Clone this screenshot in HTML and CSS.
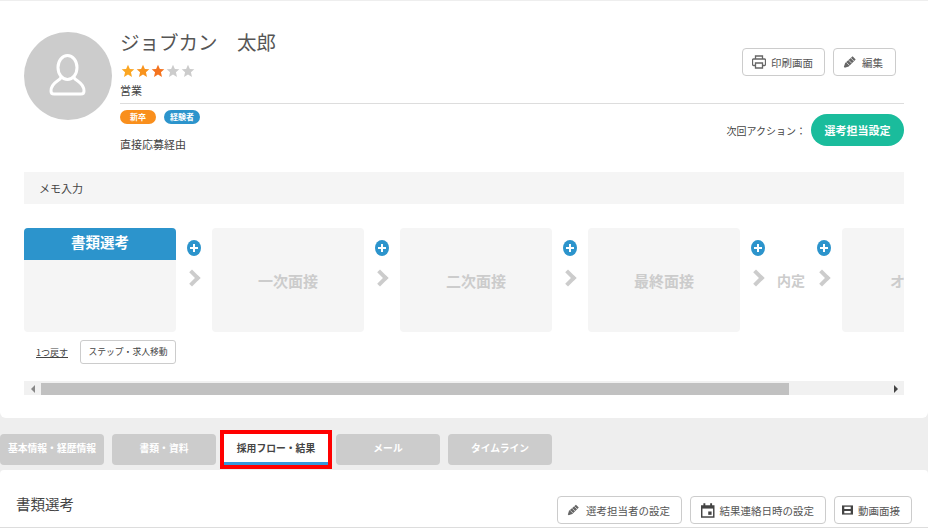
FILE: index.html
```html
<!DOCTYPE html>
<html lang="ja">

<head>
    <meta charset="UTF-8">
    <title>ジョブカン 太郎</title>
    <link rel="stylesheet" href="styles.css">
</head>

<body>
    <div class="card">
        <div class="profile">
            <div class="avatar">
                <svg width="56" height="56" viewBox="0 0 56 56" fill="none" stroke="#fff" stroke-width="3" stroke-linecap="round">
                    <ellipse cx="27.500" cy="19.500" rx="9.500" ry="12" />
                    <path d="M21 29.500C20 33 11 34 11 43q0 3 3 3h27q3 0 3-3C44 34 35 33 34 29.500" />
                </svg>
            </div>
            <div class="info">
                <div class="info-top">
                    <div>
                        <h1 class="name">ジョブカン　太郎</h1>
                        <div class="stars">
                            <svg class="star on" viewBox="0 0 20 20"><polygon points="10,1 12.700,7 19,7.600 14.200,11.800 15.700,18.500 10,15 4.300,18.500 5.800,11.800 1,7.600 7.300,7" /></svg>
                            <svg class="star on" viewBox="0 0 20 20"><polygon points="10,1 12.700,7 19,7.600 14.200,11.800 15.700,18.500 10,15 4.300,18.500 5.800,11.800 1,7.600 7.300,7" /></svg>
                            <svg class="star on" viewBox="0 0 20 20"><polygon points="10,1 12.700,7 19,7.600 14.200,11.800 15.700,18.500 10,15 4.300,18.500 5.800,11.800 1,7.600 7.300,7" /></svg>
                            <svg class="star" viewBox="0 0 20 20"><polygon points="10,1 12.700,7 19,7.600 14.200,11.800 15.700,18.500 10,15 4.300,18.500 5.800,11.800 1,7.600 7.300,7" /></svg>
                            <svg class="star" viewBox="0 0 20 20"><polygon points="10,1 12.700,7 19,7.600 14.200,11.800 15.700,18.500 10,15 4.300,18.500 5.800,11.800 1,7.600 7.300,7" /></svg>
                        </div>
                        <div class="dept">営業</div>
                    </div>
                    <div class="top-btns">
                        <a class="btn">
                            <svg width="14" height="14" viewBox="0 0 14 14" fill="none" stroke="#666" stroke-width="1.300"><path d="M3.500 4V1h7v3M3.500 10.500H1.500a1 1 0 0 1-1-1V5a1 1 0 0 1 1-1h11a1 1 0 0 1 1 1v4.500a1 1 0 0 1-1 1h-2" /><path d="M3.500 8h7v5h-7z" /></svg>
                            印刷画面
                        </a>
                        <a class="btn btn-edit">
                            <svg width="14" height="14" viewBox="0 0 16 16"><path d="M11 1.500l3.500 3.500-8 8-4.500 1.500-1-1 1.500-4.500z" fill="#666" /><path d="M4 8.500l3.500 3.500M6.500 6l3.500 3.500M9 3.500l3.500 3.500" stroke="#fff" stroke-width=".8" /></svg>
                            編集
                        </a>
                    </div>
                </div>
                <div class="info-bottom">
                    <div>
                        <div class="tags">
                            <span class="tag tag-orange">新卒</span>
                            <span class="tag tag-blue">経験者</span>
                        </div>
                        <div class="route">直接応募経由</div>
                    </div>
                    <div class="next">
                        <span>次回アクション：</span>
                        <a class="next-btn">選考担当設定</a>
                    </div>
                </div>
            </div>
        </div>

        <div class="memo">メモ入力</div>

        <div class="flow">
            <div class="step step-active">
                <div class="step-head">書類選考</div>
            </div>
            <div class="conn">
                <span class="plus"></span>
                <span class="chev"></span>
            </div>
            <div class="step">一次面接</div>
            <div class="conn">
                <span class="plus"></span>
                <span class="chev"></span>
            </div>
            <div class="step">二次面接</div>
            <div class="conn">
                <span class="plus"></span>
                <span class="chev"></span>
            </div>
            <div class="step">最終面接</div>
            <div class="conn">
                <span class="plus"></span>
                <span class="chev"></span>
            </div>
            <div class="step step-plain">内定</div>
            <div class="conn">
                <span class="plus"></span>
                <span class="chev"></span>
            </div>
            <div class="step step-last">オファー</div>
        </div>

        <div class="flow-actions">
            <a class="back">1つ戻す</a>
            <a class="move">ステップ・求人移動</a>
        </div>

        <div class="scrollbar">
            <span class="arrow arrow-left"></span>
            <div class="track"><div class="thumb"></div></div>
            <span class="arrow arrow-right"></span>
        </div>
    </div>

    <div class="tabs">
        <a class="tab">基本情報・経歴情報</a>
        <a class="tab">書類・資料</a>
        <a class="tab tab-active">採用フロー・結果</a>
        <a class="tab">メール</a>
        <a class="tab">タイムライン</a>
    </div>

    <div class="panel">
        <h2 class="panel-title">書類選考</h2>
        <div class="panel-btns">
            <a class="btn btn-staff">
                <svg width="14" height="14" viewBox="0 0 16 16"><path d="M11 1.500l3.500 3.500-8 8-4.500 1.500-1-1 1.500-4.500z" fill="#666" /><path d="M4 8.500l3.500 3.500M6.500 6l3.500 3.500M9 3.500l3.500 3.500" stroke="#fff" stroke-width=".8" /></svg>
                選考担当者の設定
            </a>
            <a class="btn btn-date">
                <svg width="14" height="15" viewBox="0 0 14 15"><path d="M2.500 0h2v2h5V0h2v2H14v13H0V2h2.500z" fill="#444" /><path d="M1.500 5.500h11V13.500h-11z" fill="#fff" /><path d="M7.500 8.500h3.500v3.500H7.500z" fill="#444" /></svg>
                結果連絡日時の設定
            </a>
            <a class="btn btn-movie">
                <svg width="12" height="12" viewBox="0 0 12 12"><path d="M0 1h12v10H0z" fill="#444" /><path d="M2.500 2.500h7V5h-7zM2.500 7h7v2.500h-7z" fill="#fff" /></svg>
                動画面接
            </a>
        </div>
    </div>
</body>

</html>
```

FILE: styles.css
```css
* {
    margin: 0;
    padding: 0;
    box-sizing: border-box;
}

body {
    background: #eee;
    font-family: "Noto Sans CJK JP", "Noto Sans", sans-serif;
    color: #444;
    font-size: 11px;
    width: 928px;
    height: 528px;
    overflow: hidden;
}

.card {
    background: #fff;
    margin-top: 1px;
    height: 417px;
    padding: 0 24px;
    border-radius: 0 0 6px 6px;
}

.profile {
    display: flex;
    gap: 8px;
    padding-top: 27px;
}

.avatar {
    width: 88px;
    height: 88px;
    margin-top: 4px;
    border-radius: 50%;
    background: #ccc;
    display: flex;
    align-items: center;
    justify-content: center;
    flex-shrink: 0;
}

.info {
    flex: 1;
}

.info-top {
    display: flex;
    justify-content: space-between;
    height: 76px;
    border-bottom: 1px solid #ddd;
}

.name {
    font-size: 19.500px;
    font-weight: 400;
    line-height: 28px;
    color: #555;
}

.stars {
    display: flex;
    gap: 1px;
    padding-left: 1px;
    margin-top: 8px;
}

.star {
    width: 14px;
    height: 14px;
    fill: #ccc;
}

.star.on:nth-child(1) {
    fill: #fba622;
}

.star.on:nth-child(2) {
    fill: #f8931d;
}

.star.on:nth-child(3) {
    fill: #f4731e;
}

.dept {
    line-height: 18px;
    margin-top: 3px;
}

.top-btns {
    display: flex;
    gap: 8px;
    padding: 20px 8px 0 0;
    height: 48px;
}

.btn {
    display: inline-flex;
    align-items: center;
    gap: 5px;
    height: 28px;
    padding: 0 11px 0 9px;
    background: #fff;
    border: 1px solid #ccc;
    border-radius: 4px;
    font-size: 10.500px;
    color: #555;
    white-space: nowrap;
}

.btn-edit {
    width: 63px;
}

.info-bottom {
    display: flex;
    justify-content: space-between;
}

.tags {
    display: flex;
    gap: 8px;
    padding-top: 6px;
}

.tag {
    width: 36px;
    height: 14px;
    border-radius: 7px;
    color: #fff;
    font-size: 8px;
    font-weight: 700;
    line-height: 14px;
    text-align: center;
}

.tag-orange {
    background: #f98f1d;
}

.tag-blue {
    background: #2c94cc;
}

.route {
    margin-top: 11px;
    line-height: 18px;
}

.next {
    display: flex;
    align-items: center;
    gap: 5px;
    height: 32px;
    margin-top: 10px;
    font-size: 10px;
}

.next-btn {
    width: 93px;
    height: 32px;
    border-radius: 16px;
    background: #1abc9c;
    color: #fff;
    font-size: 11px;
    font-weight: 700;
    line-height: 32px;
    text-align: center;
}

.memo {
    margin-top: 19px;
    height: 32px;
    background: #f5f5f5;
    padding-left: 15px;
    line-height: 32px;
}

.flow {
    display: flex;
    height: 104px;
    margin-top: 24px;
    overflow: hidden;
}

.step {
    width: 152px;
    flex-shrink: 0;
    background: #f5f5f5;
    border-radius: 4px;
    display: flex;
    align-items: center;
    justify-content: center;
    color: #ccc;
    font-size: 15px;
    font-weight: 700;
}

.step-active {
    display: block;
    overflow: hidden;
}

.step-head {
    height: 32px;
    background: #2c94cc;
    color: #fff;
    font-size: 14.500px;
    line-height: 28px;
    text-align: center;
}

.step-plain {
    width: 30px;
    background: none;
    white-space: nowrap;
    font-size: 14px;
}

.step-last {
    justify-content: flex-start;
    padding-left: 48px;
    white-space: nowrap;
}

.conn {
    width: 36px;
    flex-shrink: 0;
    display: flex;
    flex-direction: column;
    align-items: center;
    gap: 16px;
    padding-top: 12px;
}

.plus {
    width: 14px;
    height: 16px;
    border-radius: 50%;
    background: linear-gradient(#fff, #fff) center / 8px 2px no-repeat, linear-gradient(#fff, #fff) center / 2px 8px no-repeat, #2c94cc;
}

.chev {
    width: 12px;
    height: 12px;
    margin-left: -5px;
    border-top: 4px solid #ccc;
    border-right: 4px solid #ccc;
    transform: rotate(45deg);
}

.flow-actions {
    display: flex;
    align-items: center;
    gap: 12px;
    margin-top: 8px;
    padding-left: 12px;
}

.back {
    font-size: 9px;
    text-decoration: underline;
}

.move {
    width: 96px;
    height: 24px;
    border: 1px solid #ccc;
    border-radius: 3px;
    font-size: 8.800px;
    line-height: 22px;
    text-align: center;
}

.scrollbar {
    display: flex;
    align-items: flex-end;
    height: 14px;
    margin-top: 17px;
    background: #f1f1f1;
}

.track {
    flex: 1;
    height: 12px;
}

.thumb {
    width: 748px;
    height: 12px;
    background: #c1c1c1;
}

.arrow {
    width: 17px;
    height: 12px;
    display: flex;
    align-items: center;
    justify-content: center;
}

.arrow::before {
    content: "";
    border: 4px solid transparent;
}

.arrow-left::before {
    border-right-color: #888;
    border-left-width: 0;
}

.arrow-right::before {
    border-left-color: #444;
    border-right-width: 0;
}

.tabs {
    display: flex;
    gap: 8px;
    margin-top: 16px;
    height: 31px;
}

.tab {
    width: 104px;
    background: #ccc;
    border-radius: 4px;
    color: #fff;
    font-size: 9.800px;
    font-weight: 700;
    line-height: 28px;
    text-align: center;
    white-space: nowrap;
}

.tab-active {
    background: #fff;
    color: #444;
    border-radius: 0;
    border-bottom: 3px solid #3498db;
    outline: 4px solid #f00;
}

.panel {
    display: flex;
    justify-content: space-between;
    align-items: flex-start;
    height: 58px;
    margin-top: 5px;
    padding: 24px 16px 0;
    background: #fff;
    border-bottom: 1px solid #ddd;
    border-radius: 4px 4px 0 0;
}

.panel-title {
    font-size: 14.500px;
    font-weight: 400;
    line-height: 20px;
}

.panel-btns {
    display: flex;
    gap: 8px;
    padding-top: 2px;
}

.btn-staff {
    width: 125px;
    gap: 6px;
}

.btn-date {
    width: 136px;
    padding-left: 10px;
}

.btn-movie {
    width: 78px;
    padding-left: 7px;
}
```
